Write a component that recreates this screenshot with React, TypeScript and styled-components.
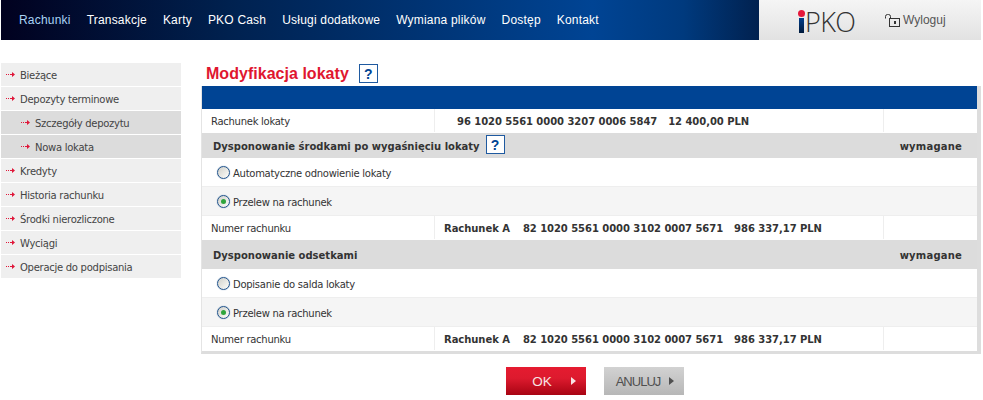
import React from 'react';
import styled, { createGlobalStyle } from 'styled-components';

const GlobalStyle = createGlobalStyle`
    html, body {
        margin: 0;
        padding: 0;
        background: #ffffff;
    }
    body {
        font-family: 'DejaVu Sans', Tahoma, sans-serif;
        font-size: 10px;
        letter-spacing: -0.27px;
        color: #333333;
    }
`;

const navItems = ['Rachunki', 'Transakcje', 'Karty', 'PKO Cash', 'Usługi dodatkowe', 'Wymiana plików', 'Dostęp', 'Kontakt'];

const sideItems = [
    { label: 'Bieżące' },
    { label: 'Depozyty terminowe' },
    { label: 'Szczegóły depozytu', sub: true },
    { label: 'Nowa lokata', sub: true },
    { label: 'Kredyty' },
    { label: 'Historia rachunku' },
    { label: 'Środki nierozliczone' },
    { label: 'Wyciągi' },
    { label: 'Operacje do podpisania' }
];

const Arrow = () => (
    <ArrowIcon width='9' height='7' viewBox='0 0 9 7'>
        <path d='M0 3.5h1M2 3.5h1M4 3.5h1' stroke='#e0173a' strokeWidth='1' fill='none' />
        <path d='M5 3h1V1l3 2.5L6 6V4H5z' fill='#e0173a' />
    </ArrowIcon>
);

const HelpButton = () => <Help>?</Help>;

const LockIcon = () => (
    <LockSvg width='15' height='13' viewBox='0 0 15 13'>
        <path d='M0.5 4.5V2.5a2 2 0 0 1 2-2h1a2 2 0 0 1 2 2v2' stroke='#333' strokeWidth='1' fill='none' />
        <rect x='4.5' y='4.5' width='10' height='8' stroke='#333' strokeWidth='1' fill='none' />
        <rect x='9' y='7' width='2' height='3' fill='#333' />
    </LockSvg>
);

const AccountRow = () => (
    <Row>
        <Label>Numer rachunku</Label>
        <Value>
            <AccountName>Rachunek A</AccountName>
            <span>82 1020 5561 0000 3102 0007 5671</span>
            <span>986 337,17 PLN</span>
        </Value>
        <Extra />
    </Row>
);

const App = () => (
    <Page>
        <GlobalStyle />
        <Header>
            <Nav>
                {navItems.map((item, index) => (
                    <NavLink key={item} $active={index === 0}>
                        {item}
                    </NavLink>
                ))}
            </Nav>
            <Brand>
                <Logo>
                    <LogoI />
                    PKO
                </Logo>
                <Logout>
                    <LockIcon />
                    Wyloguj
                </Logout>
            </Brand>
        </Header>
        <Main>
            <Sidebar>
                {sideItems.map((item) => (
                    <SideItem key={item.label} $sub={item.sub}>
                        <Arrow />
                        {item.label}
                    </SideItem>
                ))}
            </Sidebar>
            <Content>
                <TitleRow>
                    <Title>Modyfikacja lokaty</Title>
                    <HelpButton />
                </TitleRow>
                <Table>
                    <BlueBar />
                    <Row>
                        <Label>Rachunek lokaty</Label>
                        <Value $indent>
                            <span>96 1020 5561 0000 3207 0006 5847</span>
                            <span>12 400,00 PLN</span>
                        </Value>
                        <Extra />
                    </Row>
                    <Section $height={25}>
                        <SectionTitle>
                            Dysponowanie środkami po wygaśnięciu lokaty
                            <HelpButton />
                        </SectionTitle>
                        <Required>wymagane</Required>
                    </Section>
                    <RadioRow>
                        <Radio />
                        <RadioLabel>Automatyczne odnowienie lokaty</RadioLabel>
                    </RadioRow>
                    <RadioRow $shaded>
                        <Radio $checked />
                        <RadioLabel>Przelew na rachunek</RadioLabel>
                    </RadioRow>
                    <AccountRow />
                    <Section $height={29}>
                        <SectionTitle>Dysponowanie odsetkami</SectionTitle>
                        <Required>wymagane</Required>
                    </Section>
                    <RadioRow>
                        <Radio />
                        <RadioLabel>Dopisanie do salda lokaty</RadioLabel>
                    </RadioRow>
                    <RadioRow $shaded>
                        <Radio $checked />
                        <RadioLabel>Przelew na rachunek</RadioLabel>
                    </RadioRow>
                    <AccountRow />
                </Table>
                <Actions>
                    <OkButton>OK</OkButton>
                    <CancelButton>ANULUJ</CancelButton>
                </Actions>
            </Content>
        </Main>
    </Page>
);

export default App;

const Page = styled.div`
    width: 983px;
    height: 400px;
    padding-left: 1px;
    box-sizing: border-box;
    overflow: hidden;
`;

const Header = styled.header`
    display: flex;
    width: 980px;
    height: 40px;
`;

const Nav = styled.nav`
    flex: 1;
    display: flex;
    align-items: center;
    gap: 16px;
    padding-left: 18px;
    background: linear-gradient(90deg, #01011f 0%, #00214f 30%, #004494 78%, #003a7e 90%, #01214f 100%);
`;

const NavLink = styled.a<{ $active?: boolean }>`
    font-family: 'Liberation Sans', Arial, sans-serif;
    font-size: 12px;
    letter-spacing: 0.2px;
    color: ${(p) => (p.$active ? '#a9d3f5' : '#ffffff')};
`;

const Brand = styled.div`
    width: 222px;
    display: flex;
    align-items: center;
    padding-left: 40px;
    box-sizing: border-box;
    background: linear-gradient(180deg, #f5f5f5 0%, #e2e2e2 100%);
`;

const Logo = styled.div`
    display: flex;
    align-items: flex-end;
    width: 86px;
    height: 24px;
    margin-top: 1px;
    font-family: 'Open Sans', 'Liberation Sans', sans-serif;
    font-weight: 300;
    font-size: 27px;
    line-height: 22px;
    letter-spacing: -0.6px;
    color: #333333;
`;

const LogoI = styled.span`
    position: relative;
    width: 5px;
    height: 15px;
    margin-right: 1px;
    background: linear-gradient(180deg, #003f8c 0%, #001a3c 100%);

    &::before {
        content: '';
        position: absolute;
        top: -8px;
        left: -1px;
        width: 7px;
        height: 7px;
        border-radius: 50%;
        background: #e5173a;
    }
`;

const Logout = styled.a`
    display: flex;
    align-items: center;
    font-family: 'Liberation Sans', Arial, sans-serif;
    font-size: 12px;
    letter-spacing: 0;
    color: #555555;
`;

const LockSvg = styled.svg`
    margin-right: 3px;
`;

const Main = styled.main`
    display: flex;
    align-items: flex-start;
    padding-top: 23px;
`;

const Sidebar = styled.aside`
    width: 180px;
    display: flex;
    flex-direction: column;
    gap: 1px;
`;

const SideItem = styled.div<{ $sub?: boolean }>`
    display: flex;
    align-items: center;
    height: 23px;
    padding: 1px 0 0 ${(p) => (p.$sub ? '20px' : '5px')};
    box-sizing: border-box;
    background: ${(p) => (p.$sub ? '#dcdcdc' : '#efefef')};
    color: #444444;
`;

const ArrowIcon = styled.svg`
    margin: -1px 5px 0 0;
`;

const Content = styled.section`
    margin-left: 20px;
    width: 780px;
`;

const TitleRow = styled.div`
    display: flex;
    align-items: center;
    height: 21px;
    padding: 0 0 2px 5px;
    gap: 10px;
`;

const Title = styled.h1`
    margin: 0;
    font-family: 'Liberation Sans', Arial, sans-serif;
    font-size: 16px;
    font-weight: 700;
    letter-spacing: 0.03px;
    color: #e0162f;
`;

const Help = styled.span`
    display: inline-flex;
    align-items: center;
    justify-content: center;
    width: 17px;
    height: 17px;
    border: 1px solid #1f5aa0;
    background: #ffffff;
    font-family: 'Liberation Sans', Arial, sans-serif;
    font-size: 14px;
    font-weight: 700;
    letter-spacing: 0;
    color: #004494;
`;

const Table = styled.div`
    border-left: 1px solid #e4e4e4;
    border-right: 4px solid #dddddd;
    border-bottom: 3px solid #dddddd;
`;

const BlueBar = styled.div`
    height: 23px;
    background: #004494;
`;

const Row = styled.div`
    display: grid;
    grid-template-columns: 233px 449px 1fr;
    height: 23px;
    border-bottom: 1px solid transparent;
    align-items: stretch;
`;

const Label = styled.div`
    display: flex;
    align-items: center;
    padding: 1px 0 0 9px;
    border-right: 1px solid #eeeeee;
`;

const Value = styled.div<{ $indent?: boolean }>`
    display: flex;
    align-items: center;
    gap: 11px;
    padding: 2px 0 0 ${(p) => (p.$indent ? '22px' : '9px')};
    border-right: 1px solid #eeeeee;
    font-weight: 700;
    letter-spacing: -0.05px;
`;

const AccountName = styled.span`
    margin-right: 2px;
`;

const Extra = styled.div``;

const Section = styled.div<{ $height: number }>`
    display: flex;
    align-items: center;
    justify-content: space-between;
    height: ${(p) => p.$height}px;
    padding: 0 15px 0 11px;
    background: #dcdcdc;
    font-weight: 700;
    letter-spacing: 0;
`;

const SectionTitle = styled.div`
    display: flex;
    align-items: center;
    gap: 6px;
    padding-top: 1px;

    ${Help} {
        margin: -3px 0 0;
    }
`;

const Required = styled.div`
    padding-top: 1px;
    letter-spacing: 0.2px;
`;

const RadioRow = styled.div<{ $shaded?: boolean }>`
    display: flex;
    align-items: center;
    height: 28px;
    padding-left: 15px;
    border-bottom: 1px solid #eeeeee;
    background: ${(p) => (p.$shaded ? '#f5f5f5' : '#ffffff')};
`;

const RadioLabel = styled.span`
    padding-top: 2px;
`;

const Radio = styled.span<{ $checked?: boolean }>`
    position: relative;
    width: 11px;
    height: 11px;
    margin-right: 3px;
    border: 1px solid #24558c;
    border-radius: 50%;
    background: linear-gradient(135deg, #d0d0ca 0%, #f0f0ec 70%, #ffffff 100%);
    box-shadow: 0 0 1px #5a86b5;

    &::after {
        content: '';
        display: ${(p) => (p.$checked ? 'block' : 'none')};
        position: absolute;
        top: 3px;
        left: 3px;
        width: 5px;
        height: 5px;
        border-radius: 50%;
        background: #2fa53c;
    }
`;

const Actions = styled.div`
    display: flex;
    gap: 18px;
    padding: 13px 0 0 305px;
`;

const ActionButton = styled.button`
    position: relative;
    width: 80px;
    height: 28px;
    padding: 0;
    border: 0;
    font-family: 'Liberation Sans', Arial, sans-serif;
    font-weight: 400;

    &::after {
        content: '';
        position: absolute;
        top: 10px;
        right: 10px;
        border-left: 5px solid currentColor;
        border-top: 4px solid transparent;
        border-bottom: 4px solid transparent;
    }
`;

const OkButton = styled(ActionButton)`
    padding-right: 8px;
    font-size: 13.5px;
    color: #f8e4e4;
    background: linear-gradient(180deg, #e51b30 0%, #dd1a2e 40%, #a80413 100%);
`;

const CancelButton = styled(ActionButton)`
    padding-right: 12px;
    font-size: 13px;
    letter-spacing: -1px;
    color: #4f4f4f;
    background: linear-gradient(180deg, #d2d2d2 0%, #b7b7b7 100%);
`;
